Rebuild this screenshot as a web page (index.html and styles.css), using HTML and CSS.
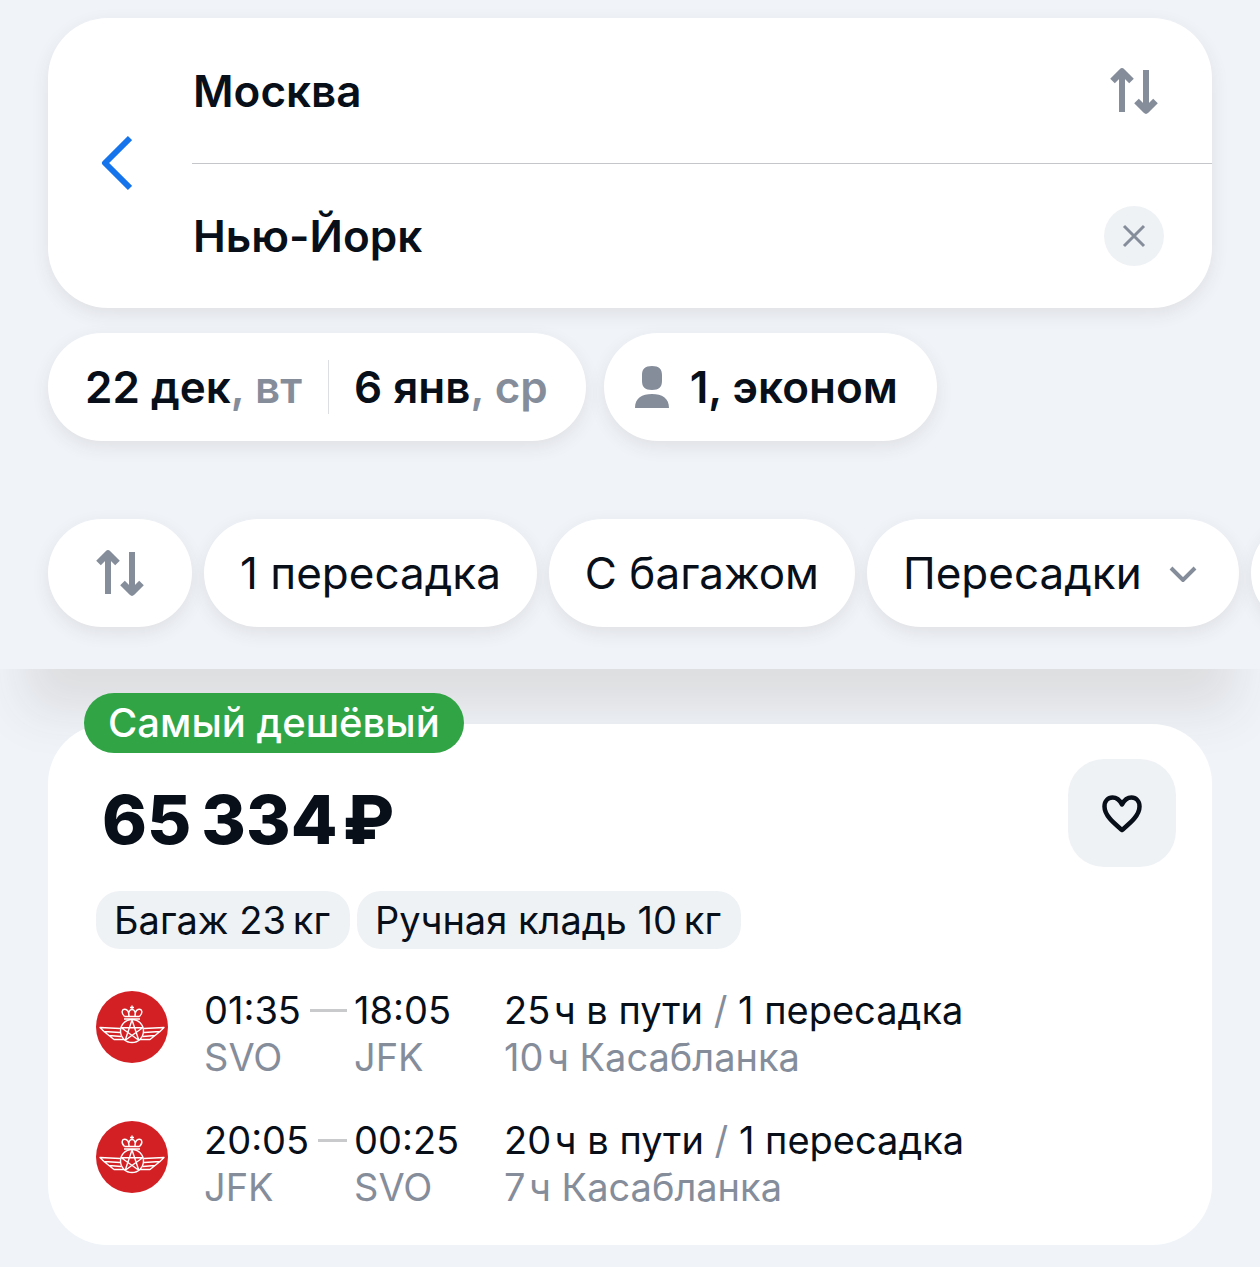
FILE: index.html
```html
<!DOCTYPE html>
<html lang="ru">
<head>
<meta charset="utf-8">
<meta name="viewport" content="width=device-width, initial-scale=1">
<title>Москва — Нью-Йорк</title>
<link rel="stylesheet" href="styles.css">
</head>
<body>
<svg class="defs" aria-hidden="true">
  <symbol id="swap" viewBox="0 0 48 48">
    <path d="M12 45V6M36 3v39" fill="none" stroke="currentColor" stroke-width="6"/>
    <path d="M2.500 14 12 4.500l9.500 9.500M26.500 34l9.500 9.500 9.500-9.500" fill="none" stroke="currentColor" stroke-width="6.500" stroke-linejoin="round"/>
  </symbol>
  <symbol id="airline" viewBox="0 0 72 72">
    <circle cx="36" cy="36" r="36" fill="#d32025"/>
    <g fill="none" stroke="#fff" stroke-width="1.400" stroke-linejoin="round">
      <circle cx="36" cy="40" r="11.500"/>
      <path d="M36 29 42.800 49.300 25.300 36.700h21.400L29.200 49.300Z"/>
      <path d="M24 37.500 4 36.500l4 4 16 1M8 40.500l5 4 12 1M13 44.500l5 4h10M48 37.500l20-1-4 4-16 1M64 40.500l-5 4-12 1M59 44.500l-5 4H44"/>
      <path d="M28 28h16M28.500 25.500h15M28.500 25.500c-4-4-2.500-8 1.500-7 2 .7 3 3 3 7M43.500 25.500c4-4 2.500-8-1.500-7-2 .7-3 3-3 7M33 25.500c-1-5 1-7 3-7s4 2 3 7M36 14.500v4M34 16.500h4"/>
    </g>
  </symbol>
</svg>

<header class="search">
  <form class="route">
    <button class="icon-button route__back" type="button" aria-label="Назад">
      <svg width="32" height="56" viewBox="0 0 32 56"><path d="M30 3 5 28l25 25" fill="none" stroke="#1573eb" stroke-width="6" stroke-linejoin="round"/></svg>
    </button>
    <div class="route__fields">
      <div class="route__row">
        <input class="route__input" type="text" value="Москва" aria-label="Откуда">
        <button class="icon-button route__action" type="button" aria-label="Поменять местами">
          <svg width="48" height="48"><use href="#swap"/></svg>
        </button>
      </div>
      <div class="route__row">
        <input class="route__input" type="text" value="Нью-Йорк" aria-label="Куда">
        <button class="icon-button route__action route__clear" type="button" aria-label="Очистить">
          <svg width="24" height="24" viewBox="0 0 24 24"><path d="M2 2l20 20M22 2 2 22" fill="none" stroke="currentColor" stroke-width="3"/></svg>
        </button>
      </div>
    </div>
  </form>

  <div class="params">
    <div class="pill dates">
      <button class="date" type="button">22 дек<span class="muted">, вт</span></button>
      <button class="date" type="button">6 янв<span class="muted">, ср</span></button>
    </div>
    <button class="pill passengers" type="button">
      <svg width="34" height="44" viewBox="0 0 34 44" fill="currentColor"><path d="M7 10C7 4 10 1 17 1s10 3 10 9v6c0 6-3 9-10 9S7 22 7 16ZM0 43C0 33 7 29 17 29s17 4 17 14Z"/></svg>
      <span>1, эконом</span>
    </button>
  </div>

  <nav class="filters" aria-label="Фильтры">
    <button class="pill chip chip--icon" type="button" aria-label="Сортировка"><svg width="48" height="48"><use href="#swap"/></svg></button>
    <button class="pill chip" type="button">1 пересадка</button>
    <button class="pill chip" type="button">С багажом</button>
    <button class="pill chip chip--menu" type="button">Пересадки
      <svg width="28" height="18" viewBox="0 0 28 18"><path d="m2 4 12 12L26 4" fill="none" stroke="currentColor" stroke-width="4"/></svg>
    </button>
    <button class="pill chip chip--icon" type="button" aria-label="Ещё"></button>
  </nav>
</header>

<main class="results">
  <article class="ticket">
    <span class="badge">Самый дешёвый</span>
    <div class="ticket__head">
      <h2 class="price">65&#8201;334&#8202;₽</h2>
      <button class="icon-button favorite" type="button" aria-label="В избранное">
        <svg width="44" height="44" viewBox="0 0 44 44"><path d="M22 39C15 33 4.500 25 4.500 15.500 4.500 10 8 6.500 12.500 6.500c4.500 0 7.500 3 9.500 7 2-4 5-7 9.500-7 4.500 0 8 3.500 8 9C39.500 25 29 33 22 39Z" fill="none" stroke="#080f19" stroke-width="4.500" stroke-linejoin="round"/></svg>
      </button>
    </div>
    <ul class="tags">
      <li class="tag">Багаж 23&#8201;кг</li>
      <li class="tag">Ручная кладь 10&#8201;кг</li>
    </ul>
    <section class="flight">
      <svg class="flight__logo" role="img" aria-label="Royal Air Maroc"><use href="#airline"/></svg>
      <div class="stop"><div class="stop__time stop__time--from">01:35</div><div class="muted">SVO</div></div>
      <div class="stop"><div class="stop__time">18:05</div><div class="muted">JFK</div></div>
      <div class="info"><div>25&#8202;ч в пути <span class="muted">/</span> 1 пересадка</div><div class="muted">10&#8202;ч Касабланка</div></div>
    </section>
    <section class="flight">
      <svg class="flight__logo" role="img" aria-label="Royal Air Maroc"><use href="#airline"/></svg>
      <div class="stop"><div class="stop__time stop__time--from">20:05</div><div class="muted">JFK</div></div>
      <div class="stop"><div class="stop__time">00:25</div><div class="muted">SVO</div></div>
      <div class="info"><div>20&#8202;ч в пути <span class="muted">/</span> 1 пересадка</div><div class="muted">7&#8202;ч Касабланка</div></div>
    </section>
  </article>
</main>
</body>
</html>
```
FILE: styles.css
```css
:root {
  --page: #f0f4f9;
  --ink: #080f19;
  --grey: #858d9b;
  --soft: #eff2f5;
  --shadow: 0 6px 18px rgba(50, 25, 0, .09);
}

* {
  box-sizing: border-box;
}

body {
  margin: 0;
  background: var(--page);
  color: var(--ink);
  font-family: Inter, "Liberation Sans", sans-serif;
  font-size: 44px;
}

button,
input {
  margin: 0;
  padding: 0;
  border: 0;
  background: none;
  color: inherit;
  font: inherit;
}

.defs {
  position: absolute;
  width: 0;
  height: 0;
}

.muted {
  color: var(--grey);
}

.icon-button {
  display: flex;
  flex: none;
  align-items: center;
  justify-content: center;
  color: var(--grey);
}

/* Search header */
.search {
  padding: 18px 48px 42px;
  overflow: clip;
  background: var(--page);
  box-shadow: 0 66px 48px -24px rgba(60, 30, 0, .1);
}

.route {
  display: flex;
  border-radius: 60px;
  background: #fff;
  box-shadow: var(--shadow);
}

.route__back {
  width: 144px;
  padding-right: 8px;
}

.route__fields {
  flex: 1;
  min-width: 0;
}

.route__row {
  display: flex;
  align-items: center;
  height: 145px;
  padding-right: 48px;
}

.route__row + .route__row {
  border-top: 1px solid #c4c6c9;
}

.route__input {
  flex: 1;
  min-width: 0;
  padding-left: 1px;
  font-weight: 600;
}

.route__action {
  width: 60px;
  height: 60px;
}

.route__clear {
  border-radius: 50%;
  background: var(--soft);
}

.params {
  display: flex;
  gap: 18px;
  margin-top: 25px;
  font-weight: 600;
}

.pill {
  display: flex;
  flex: none;
  align-items: center;
  height: 108px;
  border-radius: 54px;
  background: #fff;
  box-shadow: var(--shadow);
}

.dates {
  padding: 0 12px;
}

.date {
  height: 54px;
  padding: 0 26px 0 25px;
}

.date + .date {
  border-left: 1px solid #dcdee1;
}

.passengers {
  gap: 21px;
  padding: 0 39px 0 31px;
}

.passengers svg {
  color: var(--grey);
}

.filters {
  display: flex;
  gap: 12px;
  margin-top: 78px;
}

.chip {
  padding: 0 36px;
}

.chip--icon {
  justify-content: center;
  width: 144px;
  color: var(--grey);
}

.chip--menu {
  gap: 27px;
  padding-right: 42px;
}

.chip--menu svg {
  color: var(--grey);
}

/* Results */
.results {
  position: relative;
  padding: 55px 48px 22px;
}

.ticket {
  position: relative;
  padding: 35px 36px 34px 48px;
  border-radius: 60px;
  background: #fff;
  font-size: 38px;
  line-height: 47px;
}

.badge {
  position: absolute;
  top: -31px;
  left: 36px;
  height: 60px;
  padding: 0 24px;
  border-radius: 30px;
  background: #31a546;
  color: #fff;
  font-size: 40px;
  font-weight: 500;
  line-height: 60px;
}

.ticket__head {
  display: flex;
  justify-content: space-between;
}

.price {
  margin: 0;
  padding-left: 6px;
  font-size: 68px;
  font-weight: 800;
  line-height: 120px;
}

.favorite {
  width: 108px;
  height: 108px;
  border-radius: 36px;
  background: var(--soft);
}

.tags {
  display: flex;
  gap: 7px;
  margin: 12px 0 38px;
  padding: 0;
  list-style: none;
}

.tag {
  padding: 0 20px 0 18px;
  border-radius: 24px;
  background: var(--soft);
  line-height: 58px;
}

.flight {
  display: grid;
  grid-template-columns: 108px 150px 150px 1fr;
}

.flight + .flight {
  margin-top: 36px;
}

.flight__logo {
  width: 72px;
  height: 72px;
  margin-top: 4px;
}

.stop__time {
  display: flex;
  align-items: center;
}

.stop__time--from::after {
  flex: 1;
  height: 3px;
  margin: 0 7px 0 9px;
  background: #c9cacc;
  content: "";
}
```
